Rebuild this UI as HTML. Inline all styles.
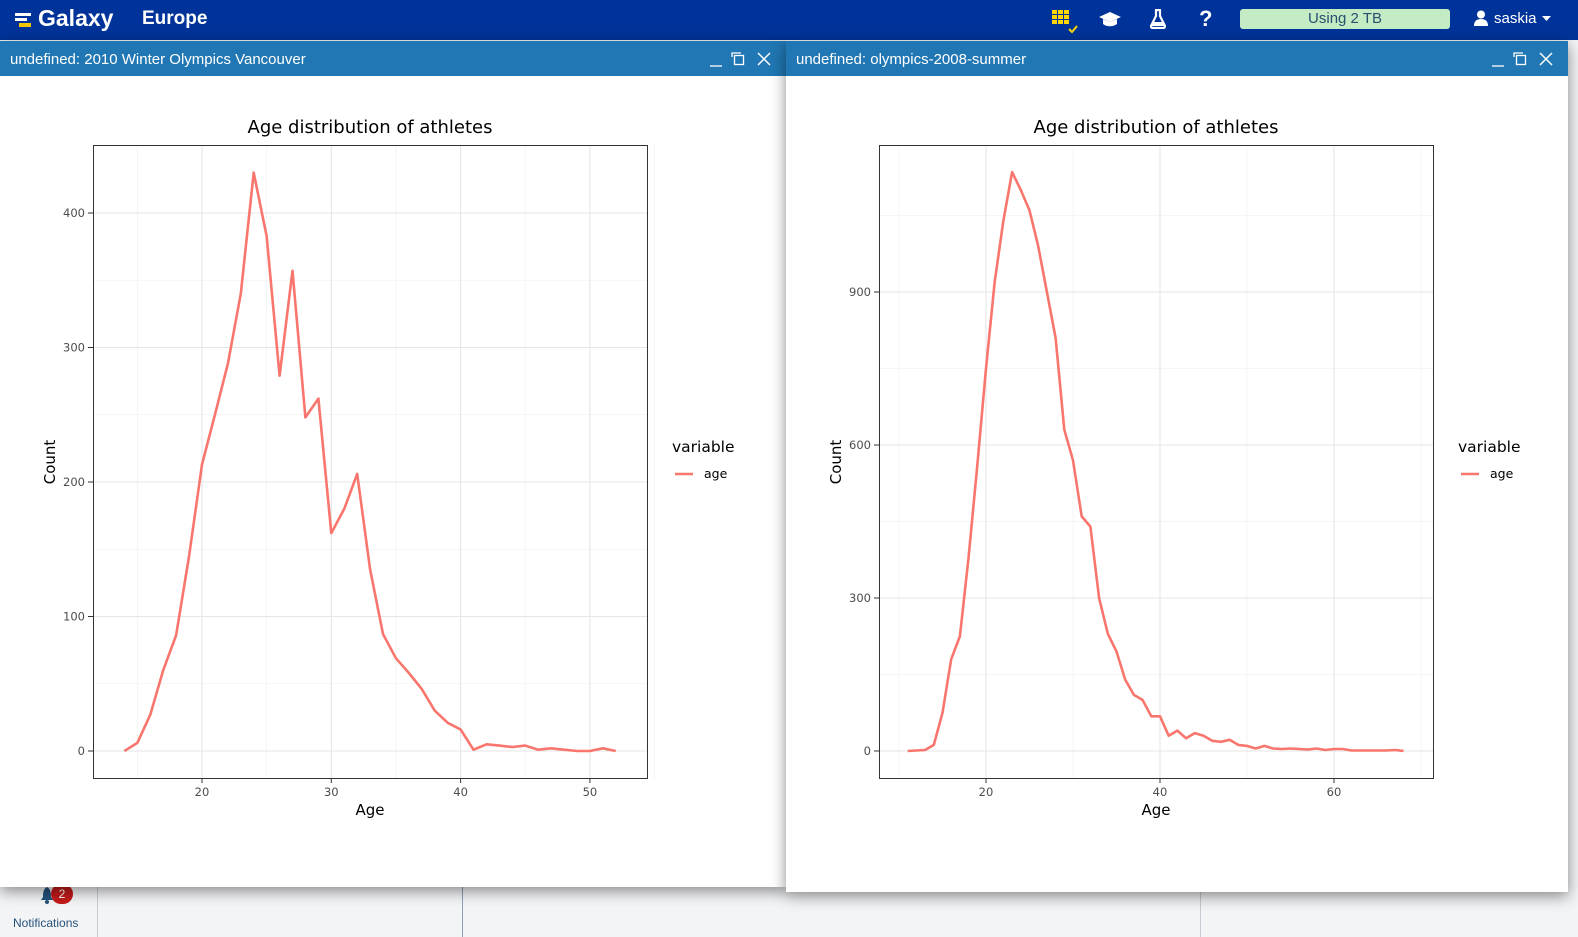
<!DOCTYPE html>
<html><head><meta charset="utf-8"><style>
*{margin:0;padding:0;box-sizing:border-box}
body{width:1578px;height:937px;overflow:hidden;background:#f3f4f6;font-family:"Liberation Sans",sans-serif;position:relative}
#top{position:absolute;left:0;top:0;width:1578px;height:40px;background:#003399;color:#fff}
.win{position:absolute;background:#fff;box-shadow:0 4px 14px rgba(0,0,0,.45)}
.hd{height:35px;background:#2077b3;color:#fff;font-size:15px;line-height:37px;padding-left:10px;position:relative}
svg text{font-family:"DejaVu Sans","Liberation Sans",sans-serif}
</style></head><body>
<div style="position:absolute;left:97px;top:887px;width:1px;height:50px;background:#c8ccd4"></div>
<div style="position:absolute;left:462px;top:887px;width:1px;height:50px;background:#8ea0bc"></div>
<div style="position:absolute;left:1200px;top:887px;width:1px;height:50px;background:#c8ccd4"></div>
<div style="position:absolute;left:40px;top:886px;width:14px;height:18px;"><svg width="14" height="18"><path d="M7 1C3 3 3 8 3 11L1 14H13L11 11C11 8 11 3 7 1Z" fill="#25537b"/><circle cx="7" cy="16" r="2" fill="#25537b"/></svg></div>
<div style="position:absolute;left:51px;top:884px;width:22px;height:20px;border-radius:10px;background:#c21a1a;color:#fff;font-size:12px;text-align:center;line-height:20px">2</div>
<div style="position:absolute;left:13px;top:916px;font-size:12px;color:#25537b">Notifications</div>

<div id="top">
 <svg style="position:absolute;left:15px;top:12px" width="22" height="16"><rect x="0" y="1" width="16" height="3" fill="#fff"/><rect x="0" y="6" width="12" height="3" fill="#fff"/><rect x="4" y="11" width="12" height="4" fill="#f2c500"/></svg>
 <div style="position:absolute;left:38px;top:5px;font-size:23px;font-weight:bold">Galaxy</div>
 <div style="position:absolute;left:142px;top:8px;font-size:19px;font-weight:bold">Europe</div>
 <svg style="position:absolute;left:1052px;top:10px" width="30" height="26"><g fill="#ffd700"><rect x="0" y="0" width="5" height="4"/><rect x="6" y="0" width="5" height="4"/><rect x="12" y="0" width="5" height="4"/><rect x="0" y="5" width="5" height="4"/><rect x="6" y="5" width="5" height="4"/><rect x="12" y="5" width="5" height="4"/><rect x="0" y="10" width="5" height="4"/><rect x="6" y="10" width="5" height="4"/><rect x="12" y="10" width="5" height="4"/></g><path d="M17 19l3 3 5-6" stroke="#ffd700" stroke-width="2" fill="none"/></svg>
 <svg style="position:absolute;left:1099px;top:11px" width="22" height="16"><path d="M11 1L0 6l11 5 11-5z" fill="#fff"/><path d="M4 8v5c4 3 10 3 14 0V8l-7 3z" fill="#fff"/></svg>
 <svg style="position:absolute;left:1150px;top:9px" width="16" height="20"><path d="M5 1h6M6 1v6L1 17q0 2 2 2h10q2 0 2-2L10 7V1" stroke="#fff" stroke-width="2.2" fill="none"/><path d="M3 13h10l2 4H1z" fill="#fff"/></svg>
 <div style="position:absolute;left:1199px;top:6px;font-size:22px;font-weight:bold">?</div>
 <div style="position:absolute;left:1240px;top:9px;width:210px;height:20px;background:#c3ebc4;border-radius:3px;color:#2a5070;font-size:15px;text-align:center;line-height:20px">Using 2 TB</div>
 <svg style="position:absolute;left:1474px;top:10px" width="14" height="16"><circle cx="7" cy="4.5" r="4" fill="#fff"/><path d="M0 16q0-7 7-7t7 7z" fill="#fff"/></svg>
 <div style="position:absolute;left:1494px;top:10px;font-size:15px">saskia</div>
 <svg style="position:absolute;left:1542px;top:16px" width="10" height="6"><path d="M0 0h9L4.5 5z" fill="#fff"/></svg>
</div>

<div class="win" style="left:0;top:41px;width:786px;height:846px">
 <div class="hd">undefined: 2010 Winter Olympics Vancouver
  <svg style="position:absolute;right:0;top:0" width="90" height="35"><path d="M14 25h12" stroke="#fff" stroke-width="1.3"/><rect x="38.5" y="14.5" width="9" height="9" stroke="#fff" fill="none" stroke-width="1.3"/><path d="M36 16v-4h9" stroke="#fff" stroke-width="1.3" fill="none"/><path d="M62 12l12 12M74 12L62 24" stroke="#fff" stroke-width="1.5"/></svg>
 </div>
 <svg id="p1" width="786" height="811" style="position:absolute;left:0;top:35px"></svg>
</div>
<div class="win" style="left:786px;top:41px;width:782px;height:851px">
 <div class="hd">undefined: olympics-2008-summer
  <svg style="position:absolute;right:0;top:0" width="90" height="35"><path d="M14 25h12" stroke="#fff" stroke-width="1.3"/><rect x="38.5" y="14.5" width="9" height="9" stroke="#fff" fill="none" stroke-width="1.3"/><path d="M36 16v-4h9" stroke="#fff" stroke-width="1.3" fill="none"/><path d="M62 12l12 12M74 12L62 24" stroke="#fff" stroke-width="1.5"/></svg>
 </div>
 <svg id="p2" width="782" height="816" style="position:absolute;left:0;top:35px"></svg>
</div>
<script>
function plot(id,ox,x0,xs,ymaj,ymin,ys,xmaj,xmin,data){
 var oy=76,s='';
 var L=93,R=648,T=145,B=779;
 var X=function(a){return L+(x0.p-L)+(a-x0.v)*xs;};
 var Y=function(c){return 751-c*ys;};
 function ln(x1,y1,x2,y2,c,w){s+='<line x1="'+x1+'" y1="'+(y1-oy)+'" x2="'+x2+'" y2="'+(y2-oy)+'" stroke="'+c+'" stroke-width="'+w+'"/>';}
 ymin.forEach(function(v){ln(L,Y(v),R,Y(v),'#f2f2f2',0.8)});
 xmin.forEach(function(v){ln(X(v),T,X(v),B,'#f2f2f2',0.8)});
 ymaj.forEach(function(v){ln(L,Y(v),R,Y(v),'#e5e5e5',1.1);ln(88,Y(v),L,Y(v),'#333',1);
  s+='<text x="85" y="'+(Y(v)-oy+4)+'" font-size="11.5" fill="#4d4d4d" text-anchor="end">'+v+'</text>';});
 xmaj.forEach(function(v){ln(X(v),T,X(v),B,'#e5e5e5',1.1);ln(X(v),B,X(v),B+4,'#333',1);
  s+='<text x="'+X(v)+'" y="'+(B-oy+17)+'" font-size="11.5" fill="#4d4d4d" text-anchor="middle">'+v+'</text>';});
 var pts=data.map(function(d){return X(d[0]).toFixed(1)+','+(Y(d[1])-oy).toFixed(1)}).join(' ');
 s+='<polyline points="'+pts+'" fill="none" stroke="#f8766d" stroke-width="2.6" stroke-linejoin="round"/>';
 s+='<rect x="'+L+'.5" y="'+(T-oy)+'.5" width="'+(R-L-1)+'" height="'+(B-T-1)+'" fill="none" stroke="#333" stroke-width="1"/>';
 s+='<text x="370" y="'+(133-oy)+'" font-size="18" fill="#000" text-anchor="middle">Age distribution of athletes</text>';
 s+='<text x="370" y="'+(815-oy)+'" font-size="15" fill="#000" text-anchor="middle">Age</text>';
 s+='<text transform="translate(55,'+(462-oy)+') rotate(-90)" font-size="15" fill="#000" text-anchor="middle">Count</text>';
 s+='<text x="672" y="'+(452-oy)+'" font-size="15.5" fill="#000">variable</text>';
 s+='<line x1="675" y1="'+(474-oy)+'" x2="693" y2="'+(474-oy)+'" stroke="#f8766d" stroke-width="2.6"/>';
 s+='<text x="704" y="'+(478-oy)+'" font-size="12.5" fill="#000">age</text>';
 document.getElementById(id).innerHTML=s;
}
var d1=[[14,0],[15,6],[16,27],[17,60],[18,86],[19,145],[20,213],[21,250],[22,288],[23,340],[24,430],[25,383],[26,279],[27,357],[28,248],[29,262],[30,162],[31,180],[32,206],[33,135],[34,87],[35,69],[36,58],[37,46],[38,30],[39,21],[40,16],[41,1],[42,5],[43,4],[44,3],[45,4],[46,1],[47,2],[48,1],[49,0],[50,0],[51,2],[52,0]];
plot('p1',0,{p:202,v:20},12.93,[0,100,200,300,400],[50,150,250,350,450],1.345,[20,30,40,50],[15,25,35,45,55],d1);
var d2=[[11,0],[13,2],[14,12],[15,75],[16,180],[17,225],[18,380],[19,560],[20,750],[21,920],[22,1040],[23,1135],[24,1100],[25,1060],[26,990],[27,900],[28,810],[29,630],[30,570],[31,460],[32,440],[33,300],[34,230],[35,195],[36,140],[37,110],[38,100],[39,68],[40,68],[41,30],[42,40],[43,25],[44,35],[45,30],[46,20],[47,18],[48,22],[49,12],[50,10],[51,5],[52,10],[53,5],[54,4],[55,5],[56,4],[57,3],[58,5],[59,2],[60,4],[61,4],[62,1],[63,1],[64,1],[65,1],[66,1],[67,2],[68,0]];
plot('p2',0,{p:200,v:20},8.7,[0,300,600,900],[150,450,750,1050],0.51,[20,40,60],[10,30,50,70],d2);
</script>
</body></html>
